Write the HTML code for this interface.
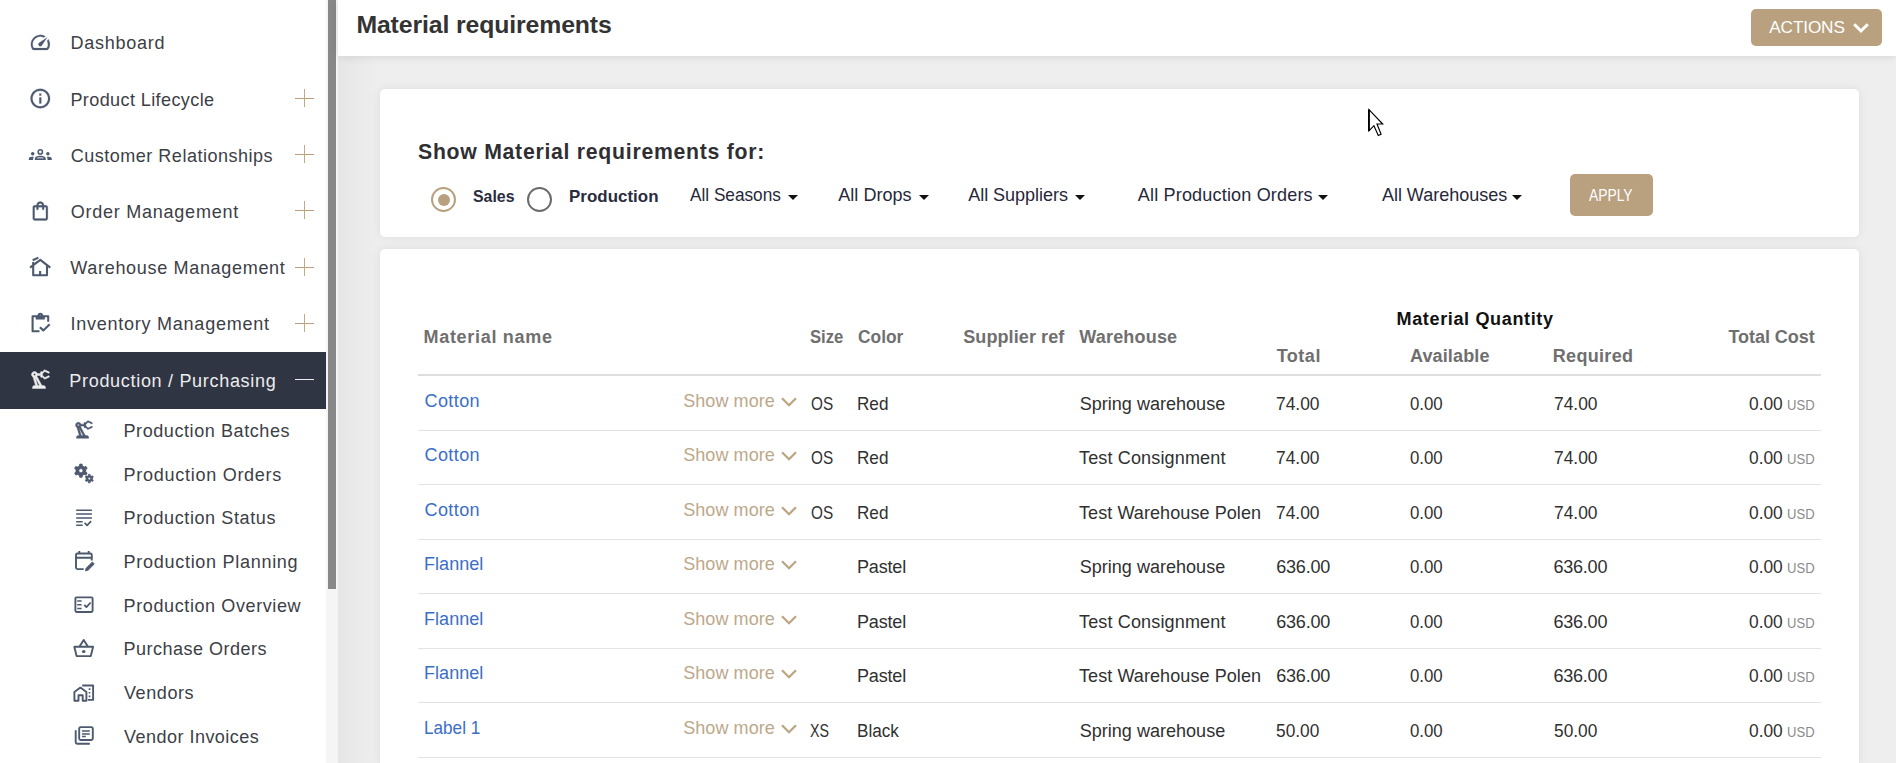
<!DOCTYPE html>
<html lang="en">
<head>
<meta charset="utf-8">
<title>Material requirements</title>
<style>
*{box-sizing:border-box;margin:0;padding:0}
html,body{width:1896px;height:763px;overflow:hidden;background:#eee}
body{font-family:"Liberation Sans",sans-serif;font-size:18.04px;color:#333;position:relative}
.t{position:absolute;line-height:22px;white-space:nowrap;transform-origin:0 0}
.box{position:absolute}
svg{position:absolute;overflow:visible}
a{text-decoration:none;color:inherit}
#side{position:absolute;left:0;top:0;width:326px;height:763px;background:#fff;color:#3c4046}
#side .act{position:absolute;left:0;top:352px;width:326px;height:56.5px;background:#303544}
.plus{position:absolute;left:295px;width:19px;height:18px}
.plus:before{content:"";position:absolute;left:0;top:9px;width:19px;height:1px;background:#b9a07a}
.plus:after{content:"";position:absolute;left:9px;top:0;width:1px;height:18px;background:#c0a987}
.plus.minus:before{background:#ececec}
.plus.minus:after{display:none}
#track{position:absolute;left:326px;top:0;width:12px;height:763px;background:#f5f5f5}
#track i{position:absolute;left:2px;top:0;width:8px;height:588.5px;background:#888}
#main{position:absolute;left:0;top:0;width:1896px;height:763px}
#hdr{position:absolute;left:338px;top:0;width:1558px;height:56px;background:#fff;box-shadow:0 1px 8px rgba(0,0,0,.10)}
#shl{position:absolute;left:338px;top:56px;width:40px;height:707px;background:linear-gradient(90deg,rgba(0,0,0,.035),rgba(0,0,0,0))}
.btn{position:absolute;background:#b9a17f;border-radius:5px;color:#fff}
.card{position:absolute;left:380px;width:1479px;background:#fff;border-radius:5px;box-shadow:0 0 10px rgba(0,0,0,.07)}
.hl{position:absolute;left:418px;width:1403px;height:1px;background:#e3e3e3}
.radio{position:absolute;width:25px;height:25px;border-radius:50%;border:2px solid #b9a17f;background:#fff}
.radio.on:after{content:"";position:absolute;left:4.5px;top:4.5px;width:12px;height:12px;border-radius:50%;background:#b9a17f}
.radio.off{border-color:#6b6b6b}
.caret{position:absolute;width:0;height:0;border-left:5.3px solid transparent;border-right:5.3px solid transparent;border-top:5.3px solid #111}
.th{color:#6f6f6f}
.lnk{color:#3b6ec6}
.sm{color:#bda88a}
.usd{color:#8a8a8a}
</style>
</head>
<body>
<nav id="side">
<div class="act"></div>
<svg id="ico" viewBox="0 0 326 763" width="326" height="763" style="left:0;top:0" fill="none" stroke="#4d596e" stroke-width="1.9" stroke-linejoin="round">
<path transform="translate(28.90 31.00) scale(0.9500)" fill="#4d596e" stroke="#4d596e" stroke-width="0.25" d="M20.38 8.57l-1.23 1.85a8 8 0 0 1-.22 7.58H5.07A8 8 0 0 1 15.58 6.85l1.85-1.23A10 10 0 0 0 3.35 19a2 2 0 0 0 1.72 1h13.85a2 2 0 0 0 1.74-1 10 10 0 0 0-.27-10.44zm-9.79 6.84a2 2 0 0 0 2.83 0l5.66-8.49-8.49 5.66a2 2 0 0 0 0 2.83z"/>
<path transform="translate(28.60 86.80) scale(0.9750)" fill="#4d596e" stroke="#4d596e" stroke-width="0.25" d="M11 17h2v-6h-2v6zm1-15C6.48 2 2 6.48 2 12s4.48 10 10 10 10-4.48 10-10S17.52 2 12 2zm0 18c-4.41 0-8-3.59-8-8s3.59-8 8-8 8 3.59 8 8-3.59 8-8 8zM11 9h2V7h-2v2z"/>
<g fill="#4d596e" stroke="none"><circle cx="40.3" cy="151.9" r="2.1" fill="none" stroke="#4d596e" stroke-width="1.6"/><path d="M34.8 159.900v-1.100c0-2 2.600-3.100 5.500-3.100s5.500 1.100 5.500 3.100v1.100z"/><path d="M36.600 158.400c.3-.9 1.900-1.400 3.700-1.400s3.400.5 3.700 1.400z" fill="#b9bfc9"/><circle cx="32.700" cy="153.700" r="1.750"/><circle cx="47.900" cy="153.700" r="1.750"/><path d="M28.800 159.900v-1c0-1.300 1.200-2.100 2.900-2.100h2.300c-.600.600-.9 1.300-.9 2.100v1z"/><path d="M51.800 159.900v-1c0-1.300-1.200-2.100-2.900-2.100h-2.300c.600.600.9 1.300.9 2.100v1z"/></g>
<path transform="translate(29.00 199.70) scale(0.9417)" fill="#4d596e" stroke="#4d596e" stroke-width="0.25" d="M18 6h-2c0-2.21-1.79-4-4-4S8 3.79 8 6H6c-1.1 0-2 .9-2 2v12c0 1.1.9 2 2 2h12c1.1 0 2-.9 2-2V8c0-1.1-.9-2-2-2zm-6-2c1.1 0 2 .9 2 2h-4c0-1.1.9-2 2-2zm6 16H6V8h2v2c0 .55.45 1 1 1s1-.45 1-1V8h4v2c0 .55.45 1 1 1s1-.45 1-1V8h2v12z"/>
<path d="M30 267.600L40.300 259.800l10 7.800M33.200 262v13.200H47v-10.200M32.700 260.200l5.700-2.600" stroke-width="2.1"/><path d="M40.100 271v4.200" stroke-width="2.1"/>
<path d="M39.500 331.200h-6.900v-15h15.600v5.600M38.600 315.400a1.700 1.700 0 0 1 3.400 0" stroke-width="2.1"/><path d="M36 316.200h8.600v3h-8.600z" fill="#4d596e" stroke-width="0.6"/><path d="M39.900 327.300l3.400 3.100 6.400-6.200" stroke-width="2.1"/>
<path transform="translate(28.50 367.50) scale(1.0000)" fill="#ececec" stroke="#ececec" stroke-width="0.45" d="M19.93 8.35l-3.6 1.68L14 7.7V6.3l2.33-2.33 3.6 1.68c.38.18.82.01 1-.36.18-.38.01-.82-.36-1l-3.92-1.83c-.38-.18-.83-.1-1.13.2L13.78 4.4c-.18-.24-.46-.4-.78-.4-.55 0-1 .45-1 1v1H8.82C8.4 4.84 7.3 4 6 4 4.34 4 3 5.34 3 7c0 1.1.6 2.05 1.48 2.58L7.08 18H6c-1.1 0-2 .9-2 2v1h13v-1c0-1.1-.9-2-2-2h-1.62L8.41 8.77c.17-.24.31-.49.41-.77H12v1c0 .55.45 1 1 1 .32 0 .6-.16.78-.4l1.74 1.74c.3.3.75.38 1.13.2l3.920-1.83c.38-.18.54-.62.36-1-.18-.37-.62-.54-1-.36zM6 8c-.55 0-1-.45-1-1s.45-1 1-1 1 .45 1 1-.45 1-1 1zm5.11 10H9.17l-2.46-8h.1l4.3 8z"/>
<path transform="translate(72.70 418.50) scale(0.9417)" fill="#4d596e" stroke="#4d596e" stroke-width="0.45" d="M19.93 8.35l-3.6 1.68L14 7.7V6.3l2.33-2.33 3.6 1.68c.38.18.82.01 1-.36.18-.38.01-.82-.36-1l-3.92-1.83c-.38-.18-.83-.1-1.13.2L13.78 4.4c-.18-.24-.46-.4-.78-.4-.55 0-1 .45-1 1v1H8.82C8.4 4.84 7.3 4 6 4 4.34 4 3 5.34 3 7c0 1.1.6 2.05 1.48 2.58L7.08 18H6c-1.1 0-2 .9-2 2v1h13v-1c0-1.1-.9-2-2-2h-1.62L8.41 8.77c.17-.24.31-.49.41-.77H12v1c0 .55.45 1 1 1 .32 0 .6-.16.78-.4l1.74 1.74c.3.3.75.38 1.13.2l3.920-1.83c.38-.18.54-.62.36-1-.18-.37-.62-.54-1-.36zM6 8c-.55 0-1-.45-1-1s.45-1 1-1 1 .45 1 1-.45 1-1 1zm5.11 10H9.17l-2.46-8h.1l4.3 8z"/>
<path fill="#4d596e" fill-rule="evenodd" stroke="#4d596e" stroke-width="0.8" stroke-linejoin="round" d="M79.40 465.93L79.71 464.11L82.09 464.11L82.40 465.93L84.28 467.02L86.02 466.38L87.20 468.43L85.78 469.61L85.78 471.79L87.20 472.97L86.02 475.02L84.28 474.38L82.40 475.47L82.09 477.29L79.71 477.29L79.40 475.47L77.52 474.38L75.78 475.02L74.60 472.97L76.02 471.79L76.02 469.61L74.60 468.43L75.78 466.38L77.52 467.02ZM78.80 470.70a2.1 2.1 0 1 0 4.2 0a2.1 2.1 0 1 0 -4.2 0Z"/>
<path fill="#4d596e" fill-rule="evenodd" stroke="#4d596e" stroke-width="0.8" stroke-linejoin="round" d="M88.37 475.64L88.54 474.37L90.06 474.37L90.23 475.64L91.40 476.32L92.58 475.82L93.35 477.14L92.33 477.92L92.33 479.28L93.35 480.06L92.58 481.38L91.40 480.88L90.23 481.56L90.06 482.83L88.54 482.83L88.37 481.56L87.20 480.88L86.02 481.38L85.25 480.06L86.27 479.28L86.27 477.92L85.25 477.14L86.02 475.82L87.20 476.32ZM88.00 478.60a1.3 1.3 0 1 0 2.6 0a1.3 1.3 0 1 0 -2.6 0Z"/>
<path d="M76.200 510.200h15.700M76.200 514h15.700M76.200 518h15.700M76.200 521.700h6.500M76.200 525.200h6.500" stroke-width="1.450"/><path d="M84.600 522.900l2.500 2.500 4-4.200" stroke-width="1.700"/>
<path d="M83.700 569.100h-6.200a1.500 1.500 0 0 1-1.500-1.500v-12.600a1.500 1.500 0 0 1 1.500-1.500h12.800a1.500 1.500 0 0 1 1.500 1.500v5.500M76 557.800h15.800M79.300 551v2.500M88.700 551v2.500"/><path d="M85.400 570.900l.7-2.700 6.200-6.200 2 2-6.200 6.200z" fill="#4d596e" stroke-width="0.8"/>
<rect x="75.400" y="597.400" width="17.200" height="14.600" rx="1.200"/><path d="M77.200 600.900h4.400M77.200 604.700h4.400M77.200 608.400h4.400" stroke-width="1.500"/><path d="M84.300 604.800l2.100 2.300 4.200-4.600" stroke-width="1.800"/>
<path d="M74.300 646.800h18.800l-2.300 9.300h-14.200zM79.500 646.500l4.200-6.600 4.200 6.600"/><ellipse cx="83.700" cy="651.500" rx="1.800" ry="1.500" fill="#4d596e" stroke="none"/>
<path d="M74.400 700.800v-8.700l6-4.500 6 4.500v8.700h-3.700v-5.600h-4.200v5.600zM82.200 685.500h10.900v14.400h-5.200"/><path d="M88.700 689.100h1.700M88.700 692.800h1.700M88.700 696.400h1.700" stroke-width="1.600"/>
<rect x="79.200" y="727.100" width="13.600" height="12.900" rx="1.500"/><path d="M75.700 730.200v12.100a1.500 1.500 0 0 0 1.500 1.500h12.600"/><path d="M82 731h7.800M82 733.900h7.800M82 736.600h3.800" stroke-width="1.500"/>
</svg>
<a class="t" style="left:70.40px;top:32px;letter-spacing:0.752px;">Dashboard</a>
<a class="t" style="left:70.40px;top:89px;letter-spacing:0.402px;">Product Lifecycle</a>
<i class="plus" style="top:89px"></i>
<a class="t" style="left:70.70px;top:145px;letter-spacing:0.500px;">Customer Relationships</a>
<i class="plus" style="top:145px"></i>
<a class="t" style="left:70.70px;top:201px;letter-spacing:0.744px;">Order Management</a>
<i class="plus" style="top:201px"></i>
<a class="t" style="left:70.30px;top:257px;letter-spacing:0.669px;">Warehouse Management</a>
<i class="plus" style="top:258px"></i>
<a class="t" style="left:70.40px;top:313px;letter-spacing:0.747px;">Inventory Management</a>
<i class="plus" style="top:314px"></i>
<a class="t" style="left:69.30px;top:370px;letter-spacing:0.681px;color:#ececec;">Production / Purchasing</a>
<i class="plus minus" style="top:370px"></i>
<a class="t" style="left:123.50px;top:420px;letter-spacing:0.568px;">Production Batches</a>
<a class="t" style="left:123.60px;top:464px;letter-spacing:0.712px;">Production Orders</a>
<a class="t" style="left:123.60px;top:507px;letter-spacing:0.593px;">Production Status</a>
<a class="t" style="left:123.60px;top:551px;letter-spacing:0.702px;">Production Planning</a>
<a class="t" style="left:123.60px;top:595px;letter-spacing:0.592px;">Production Overview</a>
<a class="t" style="left:123.60px;top:638px;letter-spacing:0.480px;">Purchase Orders</a>
<a class="t" style="left:124.00px;top:682px;letter-spacing:0.575px;">Vendors</a>
<a class="t" style="left:124.00px;top:726px;letter-spacing:0.465px;">Vendor Invoices</a>
</nav>
<div id="track"><i></i></div>
<div id="main">
<div id="shl"></div>
<div id="hdr"></div>
<h1 class="t" style="left:356.40px;top:10px;font-size:24.8px;line-height:29px;font-weight:bold;letter-spacing:-0.116px;color:#333;">Material requirements</h1>
<div class="btn" style="left:1751px;top:9px;width:131px;height:37px"></div>
<span class="t" style="left:1769.30px;top:16px;font-size:17.22px;letter-spacing:-0.148px;color:#fff;">ACTIONS</span>
<svg viewBox="0 0 18 12" width="18" height="12" style="left:1852px;top:21.5px"><path d="M2.200 2.200L9 9l6.800-6.800" fill="none" stroke="#fff" stroke-width="3"/></svg>
<div class="card" style="top:89px;height:148px"></div>
<h3 class="t" style="left:418.00px;top:139px;font-size:21.22px;line-height:25px;font-weight:bold;letter-spacing:0.734px;color:#2f2f33;">Show Material requirements for:</h3>
<i class="radio on" style="left:431px;top:187px"></i>
<label class="t" style="left:472.80px;top:186px;font-size:16.91px;line-height:21px;font-weight:bold;color:#2a2c3f;transform:scaleX(0.9388);">Sales</label>
<i class="radio off" style="left:527px;top:187px"></i>
<label class="t" style="left:569.00px;top:186px;font-size:16.91px;line-height:21px;font-weight:bold;letter-spacing:0.034px;color:#2a2c3f;">Production</label>
<span class="t" style="left:690.40px;top:184px;color:#26283a;transform:scaleX(0.9538);">All Seasons</span>
<i class="caret" style="left:787.8px;top:195px"></i>
<span class="t" style="left:838.30px;top:184px;letter-spacing:0.009px;color:#26283a;">All Drops</span>
<i class="caret" style="left:918.5px;top:195px"></i>
<span class="t" style="left:968.20px;top:184px;letter-spacing:-0.034px;color:#26283a;">All Suppliers</span>
<i class="caret" style="left:1075.0px;top:195px"></i>
<span class="t" style="left:1137.80px;top:184px;letter-spacing:0.172px;color:#26283a;">All Production Orders</span>
<i class="caret" style="left:1318.0px;top:195px"></i>
<span class="t" style="left:1381.90px;top:184px;letter-spacing:-0.022px;color:#26283a;">All Warehouses</span>
<i class="caret" style="left:1512.4px;top:195px"></i>
<div class="btn" style="left:1570px;top:174px;width:83px;height:42px"></div>
<span class="t" style="left:1589.20px;top:186px;font-size:15.78px;line-height:19px;color:#fff;transform:scaleX(0.8775);">APPLY</span>
<div class="card" style="top:249px;height:520px"></div>
<span class="t th" style="left:423.50px;top:326px;font-weight:bold;letter-spacing:0.681px;">Material name</span>
<span class="t th" style="left:810.30px;top:326px;font-weight:bold;transform:scaleX(0.9237);">Size</span>
<span class="t th" style="left:857.60px;top:326px;font-weight:bold;transform:scaleX(0.9626);">Color</span>
<span class="t th" style="left:963.20px;top:326px;font-weight:bold;letter-spacing:0.083px;">Supplier ref</span>
<span class="t th" style="left:1079.30px;top:326px;font-weight:bold;letter-spacing:0.163px;">Warehouse</span>
<span class="t" style="left:1396.50px;top:308px;font-weight:bold;letter-spacing:0.640px;color:#111;">Material Quantity</span>
<span class="t th" style="left:1276.70px;top:345px;font-weight:bold;letter-spacing:0.494px;">Total</span>
<span class="t th" style="left:1409.90px;top:345px;font-weight:bold;letter-spacing:0.140px;">Available</span>
<span class="t th" style="left:1552.80px;top:345px;font-weight:bold;letter-spacing:0.295px;">Required</span>
<span class="t th" style="left:1728.50px;top:326px;font-weight:bold;letter-spacing:-0.067px;">Total Cost</span>
<div class="hl" style="top:374px;height:2px;background:#dedede"></div>
<a class="t lnk" style="left:424.50px;top:390px;letter-spacing:0.401px;">Cotton</a>
<a class="t sm" style="left:683.20px;top:390px;letter-spacing:0.054px;">Show more</a>
<svg viewBox="0 0 16 10" width="16" height="10" style="left:781.3px;top:396.8px"><path d="M1 1.200l7 7 7-7" fill="none" stroke="#bca583" stroke-width="2.300"/></svg>
<span class="t" style="left:810.70px;top:393px;color:#303030;transform:scaleX(0.8492);">OS</span>
<span class="t" style="left:857.05px;top:393px;color:#303030;transform:scaleX(0.9501);">Red</span>
<span class="t" style="left:1079.70px;top:393px;letter-spacing:0.012px;color:#303030;">Spring warehouse</span>
<span class="t" style="left:1276.30px;top:393px;color:#303030;transform:scaleX(0.9647);">74.00</span>
<span class="t" style="left:1410.30px;top:393px;color:#303030;transform:scaleX(0.9325);">0.00</span>
<span class="t" style="left:1553.50px;top:393px;color:#303030;transform:scaleX(0.9647);">74.00</span>
<span class="t" style="left:1748.50px;top:393px;color:#303030;transform:scaleX(0.9610);">0.00</span>
<span class="t usd" style="left:1787.05px;top:396px;font-size:13.84px;line-height:18px;transform:scaleX(0.9465);">USD</span>
<div class="hl" style="top:430px"></div>
<a class="t lnk" style="left:424.50px;top:444px;letter-spacing:0.401px;">Cotton</a>
<a class="t sm" style="left:683.20px;top:444px;letter-spacing:0.054px;">Show more</a>
<svg viewBox="0 0 16 10" width="16" height="10" style="left:781.3px;top:451.2px"><path d="M1 1.200l7 7 7-7" fill="none" stroke="#bca583" stroke-width="2.300"/></svg>
<span class="t" style="left:810.70px;top:447px;color:#303030;transform:scaleX(0.8492);">OS</span>
<span class="t" style="left:857.05px;top:447px;color:#303030;transform:scaleX(0.9501);">Red</span>
<span class="t" style="left:1079.00px;top:447px;letter-spacing:0.139px;color:#303030;">Test Consignment</span>
<span class="t" style="left:1276.30px;top:447px;color:#303030;transform:scaleX(0.9647);">74.00</span>
<span class="t" style="left:1410.30px;top:447px;color:#303030;transform:scaleX(0.9325);">0.00</span>
<span class="t" style="left:1553.50px;top:447px;color:#303030;transform:scaleX(0.9647);">74.00</span>
<span class="t" style="left:1748.50px;top:447px;color:#303030;transform:scaleX(0.9610);">0.00</span>
<span class="t usd" style="left:1787.05px;top:450px;font-size:13.84px;line-height:18px;transform:scaleX(0.9465);">USD</span>
<div class="hl" style="top:484px"></div>
<a class="t lnk" style="left:424.50px;top:499px;letter-spacing:0.401px;">Cotton</a>
<a class="t sm" style="left:683.20px;top:499px;letter-spacing:0.054px;">Show more</a>
<svg viewBox="0 0 16 10" width="16" height="10" style="left:781.3px;top:505.7px"><path d="M1 1.200l7 7 7-7" fill="none" stroke="#bca583" stroke-width="2.300"/></svg>
<span class="t" style="left:810.70px;top:502px;color:#303030;transform:scaleX(0.8492);">OS</span>
<span class="t" style="left:857.05px;top:502px;color:#303030;transform:scaleX(0.9501);">Red</span>
<span class="t" style="left:1079.00px;top:502px;letter-spacing:0.068px;color:#303030;">Test Warehouse Polen</span>
<span class="t" style="left:1276.30px;top:502px;color:#303030;transform:scaleX(0.9647);">74.00</span>
<span class="t" style="left:1410.30px;top:502px;color:#303030;transform:scaleX(0.9325);">0.00</span>
<span class="t" style="left:1553.50px;top:502px;color:#303030;transform:scaleX(0.9647);">74.00</span>
<span class="t" style="left:1748.50px;top:502px;color:#303030;transform:scaleX(0.9610);">0.00</span>
<span class="t usd" style="left:1787.05px;top:505px;font-size:13.84px;line-height:18px;transform:scaleX(0.9465);">USD</span>
<div class="hl" style="top:539px"></div>
<a class="t lnk" style="left:424.00px;top:553px;letter-spacing:0.028px;">Flannel</a>
<a class="t sm" style="left:683.20px;top:553px;letter-spacing:0.054px;">Show more</a>
<svg viewBox="0 0 16 10" width="16" height="10" style="left:781.3px;top:560.2px"><path d="M1 1.200l7 7 7-7" fill="none" stroke="#bca583" stroke-width="2.300"/></svg>
<span class="t" style="left:857.00px;top:556px;letter-spacing:-0.182px;color:#303030;">Pastel</span>
<span class="t" style="left:1079.70px;top:556px;letter-spacing:0.012px;color:#303030;">Spring warehouse</span>
<span class="t" style="left:1276.30px;top:556px;letter-spacing:-0.244px;color:#303030;">636.00</span>
<span class="t" style="left:1410.30px;top:556px;color:#303030;transform:scaleX(0.9325);">0.00</span>
<span class="t" style="left:1553.50px;top:556px;letter-spacing:-0.244px;color:#303030;">636.00</span>
<span class="t" style="left:1748.50px;top:556px;color:#303030;transform:scaleX(0.9610);">0.00</span>
<span class="t usd" style="left:1787.05px;top:559px;font-size:13.84px;line-height:18px;transform:scaleX(0.9465);">USD</span>
<div class="hl" style="top:593px"></div>
<a class="t lnk" style="left:424.00px;top:608px;letter-spacing:0.028px;">Flannel</a>
<a class="t sm" style="left:683.20px;top:608px;letter-spacing:0.054px;">Show more</a>
<svg viewBox="0 0 16 10" width="16" height="10" style="left:781.3px;top:614.6px"><path d="M1 1.200l7 7 7-7" fill="none" stroke="#bca583" stroke-width="2.300"/></svg>
<span class="t" style="left:857.00px;top:611px;letter-spacing:-0.182px;color:#303030;">Pastel</span>
<span class="t" style="left:1079.00px;top:611px;letter-spacing:0.139px;color:#303030;">Test Consignment</span>
<span class="t" style="left:1276.30px;top:611px;letter-spacing:-0.244px;color:#303030;">636.00</span>
<span class="t" style="left:1410.30px;top:611px;color:#303030;transform:scaleX(0.9325);">0.00</span>
<span class="t" style="left:1553.50px;top:611px;letter-spacing:-0.244px;color:#303030;">636.00</span>
<span class="t" style="left:1748.50px;top:611px;color:#303030;transform:scaleX(0.9610);">0.00</span>
<span class="t usd" style="left:1787.05px;top:614px;font-size:13.84px;line-height:18px;transform:scaleX(0.9465);">USD</span>
<div class="hl" style="top:648px"></div>
<a class="t lnk" style="left:424.00px;top:662px;letter-spacing:0.028px;">Flannel</a>
<a class="t sm" style="left:683.20px;top:662px;letter-spacing:0.054px;">Show more</a>
<svg viewBox="0 0 16 10" width="16" height="10" style="left:781.3px;top:669.0px"><path d="M1 1.200l7 7 7-7" fill="none" stroke="#bca583" stroke-width="2.300"/></svg>
<span class="t" style="left:857.00px;top:665px;letter-spacing:-0.182px;color:#303030;">Pastel</span>
<span class="t" style="left:1079.00px;top:665px;letter-spacing:0.068px;color:#303030;">Test Warehouse Polen</span>
<span class="t" style="left:1276.30px;top:665px;letter-spacing:-0.244px;color:#303030;">636.00</span>
<span class="t" style="left:1410.30px;top:665px;color:#303030;transform:scaleX(0.9325);">0.00</span>
<span class="t" style="left:1553.50px;top:665px;letter-spacing:-0.244px;color:#303030;">636.00</span>
<span class="t" style="left:1748.50px;top:665px;color:#303030;transform:scaleX(0.9610);">0.00</span>
<span class="t usd" style="left:1787.05px;top:668px;font-size:13.84px;line-height:18px;transform:scaleX(0.9465);">USD</span>
<div class="hl" style="top:702px"></div>
<a class="t lnk" style="left:424.05px;top:717px;transform:scaleX(0.9513);">Label 1</a>
<a class="t sm" style="left:683.20px;top:717px;letter-spacing:0.054px;">Show more</a>
<svg viewBox="0 0 16 10" width="16" height="10" style="left:781.3px;top:723.5px"><path d="M1 1.200l7 7 7-7" fill="none" stroke="#bca583" stroke-width="2.300"/></svg>
<span class="t" style="left:810.10px;top:720px;color:#303030;transform:scaleX(0.7908);">XS</span>
<span class="t" style="left:857.05px;top:720px;color:#303030;transform:scaleX(0.9506);">Black</span>
<span class="t" style="left:1079.70px;top:720px;letter-spacing:0.012px;color:#303030;">Spring warehouse</span>
<span class="t" style="left:1276.30px;top:720px;color:#303030;transform:scaleX(0.9602);">50.00</span>
<span class="t" style="left:1410.30px;top:720px;color:#303030;transform:scaleX(0.9325);">0.00</span>
<span class="t" style="left:1553.50px;top:720px;color:#303030;transform:scaleX(0.9602);">50.00</span>
<span class="t" style="left:1748.50px;top:720px;color:#303030;transform:scaleX(0.9610);">0.00</span>
<span class="t usd" style="left:1787.05px;top:723px;font-size:13.84px;line-height:18px;transform:scaleX(0.9465);">USD</span>
<div class="hl" style="top:757px"></div>
<svg viewBox="1360 100 30 44" width="30" height="44" style="left:1360px;top:100px"><path d="M1369 109.600V130.900L1373.900 125.700L1378.300 135.500L1381.100 134.300L1377 124H1382.700Z" fill="#fff" stroke="#000" stroke-width="1.150" stroke-linejoin="miter"/><path d="M1368.900 109.400V131" stroke="#000" stroke-width="1.800"/></svg>
</div>
</body>
</html>
